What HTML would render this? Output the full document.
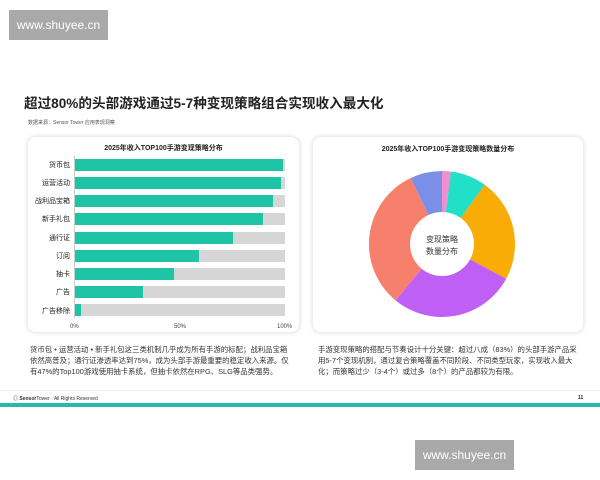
<!DOCTYPE html>
<html><head><meta charset="utf-8"><style>
*{margin:0;padding:0;box-sizing:border-box}
body{width:600px;height:480px;background:#fff;position:relative;overflow:hidden;font-family:"Liberation Sans","Noto Sans CJK SC",sans-serif;color:#222}
.wm{position:absolute;background:#a9a9a9;color:#fff;font-size:12px;display:flex;align-items:center;justify-content:center}
.card{position:absolute;background:#fff;border-radius:9px;box-shadow:0 0 4px rgba(0,0,0,.12);border:1px solid #eee}
.ct{position:absolute;font-size:7px;font-weight:bold;width:100%;text-align:center}
.lab{position:absolute;font-size:7px;right:530px;text-align:right;white-space:nowrap}
.bg{position:absolute;left:75px;width:210px;height:12px;background:#d6d6d6}
.bar{position:absolute;left:75px;height:12px;background:#1fc3a5}
.p{position:absolute;font-size:7.4px;line-height:11px;color:#333;white-space:nowrap}
</style></head><body>
<div class="wm" style="left:9px;top:10px;width:99px;height:30px">www.shuyee.cn</div>
<div style="position:absolute;left:24px;top:92px;font-size:13.6px;font-weight:bold;white-space:nowrap">超过80%的头部游戏通过5-7种变现策略组合实现收入最大化</div>
<div style="position:absolute;left:28px;top:119px;font-size:5px;color:#555">数据来源：Sensor Tower 应用表现洞察</div>

<div class="card" style="left:27px;top:136px;width:273px;height:197px"><div class="ct" style="top:6px">2025年收入TOP100手游变现策略分布</div></div>
<div class="card" style="left:312px;top:136px;width:272px;height:197px"><div class="ct" style="top:7px">2025年收入TOP100手游变现策略数量分布</div></div>

<div class="lab" style="top:160px">货币包</div>
<div class="lab" style="top:178px">运营活动</div>
<div class="lab" style="top:196px">战利品宝箱</div>
<div class="lab" style="top:214px">新手礼包</div>
<div class="lab" style="top:233px">通行证</div>
<div class="lab" style="top:251px">订阅</div>
<div class="lab" style="top:269px">抽卡</div>
<div class="lab" style="top:287px">广告</div>
<div class="lab" style="top:306px">广告移除</div>
<div class="bg" style="top:159px"></div><div class="bar" style="top:159px;width:208px"></div>
<div class="bg" style="top:177px"></div><div class="bar" style="top:177px;width:206px"></div>
<div class="bg" style="top:195px"></div><div class="bar" style="top:195px;width:198px"></div>
<div class="bg" style="top:213px"></div><div class="bar" style="top:213px;width:188px"></div>
<div class="bg" style="top:232px"></div><div class="bar" style="top:232px;width:158px"></div>
<div class="bg" style="top:250px"></div><div class="bar" style="top:250px;width:124px"></div>
<div class="bg" style="top:268px"></div><div class="bar" style="top:268px;width:99px"></div>
<div class="bg" style="top:286px"></div><div class="bar" style="top:286px;width:68px"></div>
<div class="bg" style="top:304px"></div><div class="bar" style="top:304px;width:6px"></div>
<div style="position:absolute;left:74px;top:156px;width:1px;height:162px;background:#ccc"></div>
<div style="position:absolute;left:70px;top:324px;font-size:6px;color:#444">0%</div>
<div style="position:absolute;left:174px;top:324px;font-size:6px;color:#444">50%</div>
<div style="position:absolute;left:277px;top:324px;font-size:6px;color:#444">100%</div>

<svg style="position:absolute;left:0;top:0" width="600" height="480">
<g transform="translate(442,244)">
<path d="M0,-73 A73,73 0 0 1 8.9,-72.5 L0,0Z" fill="#f08fd0"/>
<path d="M8.9,-72.5 A73,73 0 0 1 42.7,-59.2 L0,0Z" fill="#22dfc8"/>
<path d="M42.7,-59.2 A73,73 0 0 1 64.1,34.9 L0,0Z" fill="#f9ab06"/>
<path d="M64.1,34.9 A73,73 0 0 1 -46.4,56.4 L0,0Z" fill="#bf5ff5"/>
<path d="M-46.4,56.4 A73,73 0 0 1 -31.2,-66 L0,0Z" fill="#f6806c"/>
<path d="M-31.2,-66 A73,73 0 0 1 0,-73 L0,0Z" fill="#7b8ee8"/>
<circle r="32" fill="#fff"/>
<text y="-2" font-size="8" text-anchor="middle" fill="#333" font-family="Liberation Sans,Noto Sans CJK SC,sans-serif">变现策略</text>
<text y="10" font-size="8" text-anchor="middle" fill="#333" font-family="Liberation Sans,Noto Sans CJK SC,sans-serif">数量分布</text>
</g></svg>

<div class="p" style="left:30px;top:344px">货币包 • 运营活动 • 新手礼包这三类机制几乎成为所有手游的标配；战利品宝箱<br>依然高普及；通行证渗透率达到75%，成为头部手游最重要的稳定收入来源。仅<br>有47%的Top100游戏使用抽卡系统，但抽卡依然在RPG、SLG等品类强势。</div>
<div class="p" style="left:318px;top:344px">手游变现策略的搭配与节奏设计十分关键：超过八成（83%）的头部手游产品采<br>用5-7个变现机制，通过复合策略覆盖不同阶段、不同类型玩家，实现收入最大<br>化；而策略过少（3-4个）或过多（8个）的产品都较为有限。</div>
<div style="position:absolute;left:0;top:390px;width:600px;height:1px;background:#eee"></div>
<div style="position:absolute;left:13px;top:395px;font-size:5px;color:#333">◎ <b>Sensor</b>Tower · All Rights Reserved</div>
<div style="position:absolute;left:578px;top:395px;font-size:5px;font-weight:bold">11</div>
<div style="position:absolute;left:0;top:403px;width:600px;height:4px;background:#2bb9a6"></div>
<div class="wm" style="left:415px;top:440px;width:99px;height:30px">www.shuyee.cn</div>
</body></html>
